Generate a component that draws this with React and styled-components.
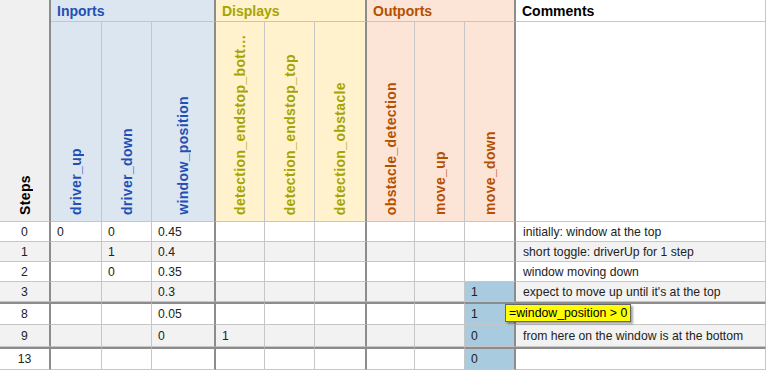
import styled, { createGlobalStyle } from "styled-components";

const GlobalStyle = createGlobalStyle`
  html, body {
    margin: 0;
    padding: 0;
    background: #fff;
  }
  body {
    font-family: "Liberation Sans", Arial, sans-serif;
  }
`;

const THIN = "#c6c6c6";
const THICK = "#8c8c8c";

const tones = {
  steps: { bg: "#f0f0f0", fg: "#000" },
  inports: { bg: "#dce6f1", fg: "#2150b5" },
  displays: { bg: "#fff2cc", fg: "#a5a500" },
  outports: { bg: "#fce4d6", fg: "#b45000" },
  comments: { bg: "#fff", fg: "#000" },
};

const Sheet = styled.div`
  position: relative;
  display: grid;
  width: 766px;
  grid-template-columns: 51px 51px 50px 64px 49px 50px 52px 48px 50px 51px 250px;
  grid-template-rows: 22px 200px 20px 20px 20px 20px 23px 22px 23px;
  font-family: "Liberation Sans", Arial, sans-serif;
`;

const GroupCell = styled.div`
  box-sizing: border-box;
  grid-column: span ${(p) => p.$span || 1};
  display: flex;
  align-items: center;
  padding: 0 6px;
  background: ${(p) => tones[p.$tone].bg};
  color: ${(p) => tones[p.$tone].fg};
  border-right: ${(p) => (p.$thick ? `2px solid ${THICK}` : `1px solid ${THIN}`)};
  border-bottom: 1px solid ${THIN};
  font-size: 14px;
  font-weight: bold;
`;

const HeadCell = styled.div`
  box-sizing: border-box;
  grid-row: span ${(p) => p.$rows || 1};
  display: flex;
  align-items: flex-end;
  justify-content: center;
  padding-bottom: 6px;
  background: ${(p) => tones[p.$tone].bg};
  color: ${(p) => tones[p.$tone].fg};
  border-right: ${(p) => (p.$thick ? `2px solid ${THICK}` : `1px solid ${THIN}`)};
  border-bottom: 1px solid ${THIN};
`;

const Label = styled.span`
  writing-mode: vertical-rl;
  transform: rotate(180deg);
  max-height: 183px;
  overflow: hidden;
  text-overflow: ellipsis;
  white-space: nowrap;
  font-size: 14px;
  font-weight: bold;
  letter-spacing: 0.35px;
`;

const Cell = styled.div`
  box-sizing: border-box;
  position: relative;
  display: flex;
  align-items: center;
  justify-content: ${(p) => (p.$center ? "center" : "flex-start")};
  padding: 0 ${(p) => (p.$center ? 0 : p.$pad || 6)}px;
  background: ${(p) => (p.$hl ? "#a8cbe0" : p.$odd ? "#f2f2f2" : "#fff")};
  border-top: ${(p) => (p.$gap ? `2px solid ${THICK}` : "0")};
  border-right: ${(p) => (p.$thick ? `2px solid ${THICK}` : `1px solid ${THIN}`)};
  border-bottom: 1px solid ${THIN};
  font-size: 12.2px;
  color: #222;
  white-space: nowrap;
`;

const Tip = styled.div`
  position: absolute;
  left: 40px;
  top: 0;
  z-index: 2;
  box-sizing: border-box;
  height: 18px;
  display: flex;
  align-items: center;
  padding: 0 3px;
  background: #ffff00;
  border: 1px solid #666;
  box-shadow: 2px 2px 2px rgba(0, 0, 0, 0.35);
  font-size: 12.3px;
  color: #000;
`;

const groups = [
  { name: "Inports", tone: "inports", span: 3 },
  { name: "Displays", tone: "displays", span: 3 },
  { name: "Outports", tone: "outports", span: 3 },
];

const columns = [
  { key: "driver_up", tone: "inports" },
  { key: "driver_down", tone: "inports" },
  { key: "window_position", tone: "inports", thick: true },
  { key: "detection_endstop_bottom", tone: "displays" },
  { key: "detection_endstop_top", tone: "displays" },
  { key: "detection_obstacle", tone: "displays", thick: true },
  { key: "obstacle_detection", tone: "outports" },
  { key: "move_up", tone: "outports" },
  { key: "move_down", tone: "outports", thick: true },
];

const rows = [
  { step: 0, driver_up: "0", driver_down: "0", window_position: "0.45", comment: "initially: window at the top" },
  { step: 1, driver_down: "1", window_position: "0.4", comment: "short toggle: driverUp for 1 step" },
  { step: 2, driver_down: "0", window_position: "0.35", comment: "window moving down" },
  { step: 3, window_position: "0.3", move_down: "1", comment: "expect to move up until it's at the top" },
  { step: 8, gap: true, window_position: "0.05", move_down: "1", tip: "=window_position > 0", comment: "" },
  { step: 9, window_position: "0", detection_endstop_bottom: "1", move_down: "0", comment: "from here on the window is at the bottom" },
  { step: 13, gap: true, move_down: "0", comment: "" },
];

const highlighted = ["move_down"];

const App = () => {
  return (
    <>
      <GlobalStyle />
      <Sheet>
        <HeadCell $tone="steps" $rows={2} $thick>
          <Label>Steps</Label>
        </HeadCell>
        {groups.map((g) => (
          <GroupCell key={g.name} $tone={g.tone} $span={g.span} $thick>
            {g.name}
          </GroupCell>
        ))}
        <GroupCell $tone="comments">Comments</GroupCell>

        {columns.map((c) => (
          <HeadCell key={c.key} $tone={c.tone} $thick={c.thick}>
            <Label>{c.key}</Label>
          </HeadCell>
        ))}
        <HeadCell $tone="comments" />

        {rows.map((r, i) => {
          const odd = i % 2 === 1;
          return [
            <Cell key={`s${r.step}`} $center $thick $odd={odd} $gap={r.gap}>
              {r.step}
            </Cell>,
            ...columns.map((c) => (
              <Cell
                key={`${r.step}-${c.key}`}
                $thick={c.thick}
                $odd={odd}
                $gap={r.gap}
                $hl={highlighted.includes(c.key) && r[c.key] !== undefined}
              >
                {r[c.key]}
                {c.key === "move_down" && r.tip && <Tip>{r.tip}</Tip>}
              </Cell>
            )),
            <Cell key={`c${r.step}`} $odd={odd} $gap={r.gap} $pad={7}>
              {r.comment}
            </Cell>,
          ];
        })}
      </Sheet>
    </>
  );
};

export default App;
